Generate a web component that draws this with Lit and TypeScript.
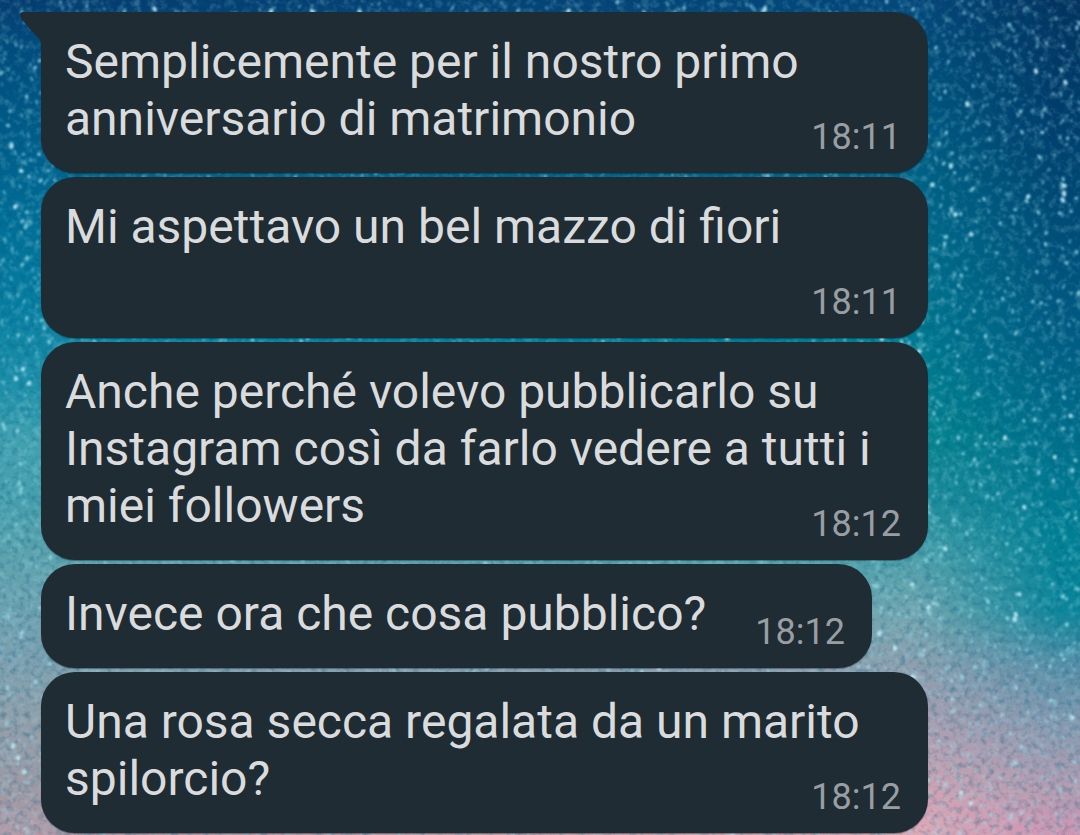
import { LitElement, html, svg, css } from "lit";
import { customElement, property } from "lit/decorators.js";

interface Message {
  text: string;
  time: string;
}

const MESSAGES: Message[] = [
  { text: "Semplicemente per il nostro primo anniversario di matrimonio", time: "18:11" },
  { text: "Mi aspettavo un bel mazzo di fiori", time: "18:11" },
  { text: "Anche perché volevo pubblicarlo su Instagram così da farlo vedere a tutti i miei followers", time: "18:12" },
  { text: "Invece ora che cosa pubblico?", time: "18:12" },
  { text: "Una rosa secca regalata da un marito spilorcio?", time: "18:12" },
];

type Stop = [number, string];

const LEFT_SKY: Stop[] = [
  [0, "#063c70"], [5, "#024a7c"], [12, "#005583"], [24, "#006a94"], [36, "#067da0"],
  [46, "#1c8fa9"], [53, "#43a2b0"], [60, "#479fac"], [68, "#62a3ae"], [78, "#7ba0b0"],
  [85, "#8f9faa"], [94, "#9d9aa5"], [100, "#b39ba8"],
];
const MIDDLE_SKY: Stop[] = [
  [0, "#05477a"], [12, "#00557f"], [26, "#006a8a"], [40, "#007890"], [52, "#04858f"],
  [60, "#228f9d"], [66, "#4a9fa9"], [74, "#75a5ae"], [80, "#909fae"], [86, "#ac9fb1"],
  [92, "#c5a2b2"], [97, "#dba5b6"], [100, "#dda9b6"],
];
const RIGHT_SKY: Stop[] = [
  [0, "#04335f"], [14, "#013c6c"], [26, "#004a76"], [40, "#005c84"], [52, "#006e8a"],
  [64, "#008094"], [73, "#0b869a"], [80, "#5b90a8"], [88, "#8f9bb0"], [95, "#b59bb0"],
  [100, "#cf95b3"],
];

/** Small seeded generator, so that the sky is the same on every load. */
function seeded(seed: number) {
  let s = seed;
  return () => {
    s = (s * 1664525 + 1013904223) >>> 0;
    return s / 4294967296;
  };
}

function starPath(seed: number, count: number, length: number): string {
  const random = seeded(seed);
  let d = "";
  for (let i = 0; i < count; i++) {
    const x = random() * 1080;
    const y = random() * 835;
    const dx = (random() - 0.5) * length;
    const dy = random() * length;
    d += `M${x.toFixed(1)} ${y.toFixed(1)}l${dx.toFixed(1)} ${dy.toFixed(1)}`;
  }
  return d;
}

const stops = (list: Stop[]) =>
  list.map(([at, color]) => svg`<stop offset=${at + "%"} stop-color=${color}></stop>`);

@customElement("starry-wallpaper")
export class StarryWallpaper extends LitElement {
  static styles = css`
    :host {
      display: block;
      position: absolute;
      inset: 0;
      overflow: hidden;
    }
    .sky {
      display: block;
      width: 100%;
      height: 100%;
    }
    .star {
      fill: none;
      stroke-linecap: round;
    }
  `;

  render() {
    return html`
      <svg class="sky" viewBox="0 0 1080 835" preserveAspectRatio="none" aria-hidden="true">
        <defs>
          <linearGradient id="left" x2="0" y2="1">${stops(LEFT_SKY)}</linearGradient>
          <linearGradient id="middle" x2="0" y2="1">${stops(MIDDLE_SKY)}</linearGradient>
          <linearGradient id="right" x2="0" y2="1">${stops(RIGHT_SKY)}</linearGradient>
          <linearGradient id="fadeMiddle">
            <stop offset="5%" stop-color="#000"></stop>
            <stop offset="86%" stop-color="#fff"></stop>
          </linearGradient>
          <linearGradient id="fadeRight">
            <stop offset="85%" stop-color="#000"></stop>
            <stop offset="98%" stop-color="#fff"></stop>
          </linearGradient>
          <mask id="maskMiddle"><rect width="1080" height="835" fill="url(#fadeMiddle)"></rect></mask>
          <mask id="maskRight"><rect width="1080" height="835" fill="url(#fadeRight)"></rect></mask>
          <filter id="dust" x="0" y="0" width="100%" height="100%">
            <feTurbulence type="fractalNoise" baseFrequency="0.12" numOctaves="3" seed="7"></feTurbulence>
            <feColorMatrix values="0 0 0 0 0.4  0 0 0 0 0.8  0 0 0 0 0.85  2.4 0 0 0 -1.15"></feColorMatrix>
          </filter>
          <filter id="shade" x="0" y="0" width="100%" height="100%">
            <feTurbulence type="fractalNoise" baseFrequency="0.16" numOctaves="3" seed="21"></feTurbulence>
            <feColorMatrix values="0 0 0 0 0  0 0 0 0 0.1  0 0 0 0 0.2  2 0 0 0 -0.9"></feColorMatrix>
          </filter>
          <filter id="soft"><feGaussianBlur stdDeviation="0.8"></feGaussianBlur></filter>
        </defs>
        <rect width="1080" height="835" fill="url(#left)"></rect>
        <rect width="1080" height="835" fill="url(#middle)" mask="url(#maskMiddle)"></rect>
        <rect width="1080" height="835" fill="url(#right)" mask="url(#maskRight)"></rect>
        <rect width="1080" height="835" filter="url(#shade)" opacity="0.4"></rect>
        <rect width="1080" height="835" filter="url(#dust)" opacity="0.25"></rect>
        <g filter="url(#soft)">
          <path class="star" d=${starPath(11, 5200, 3)} stroke="#7fd0e6" stroke-width="2" opacity="0.35"></path>
          <path class="star" d=${starPath(29, 2600, 3)} stroke="#9be2f2" stroke-width="2" opacity="0.6"></path>
          <path class="star" d=${starPath(53, 1100, 2)} stroke="#a4e4f2" stroke-width="3" opacity="0.75"></path>
          <path class="star" d=${starPath(83, 160, 2)} stroke="#c8f2fc" stroke-width="4" opacity="0.85"></path>
        </g>
      </svg>
    `;
  }
}

@customElement("chat-bubble")
export class ChatBubble extends LitElement {
  @property() text = "";
  @property() time = "";
  @property({ type: Boolean, reflect: true }) first = false;

  static styles = css`
    :host {
      display: block;
      position: relative;
      box-sizing: border-box;
      max-width: 100%;
      padding: 21px 27px 15px 24px;
      border-radius: 34px;
      background: #1f2c34;
      box-shadow: 0 1px 1px rgba(10, 25, 35, 0.4);
    }
    :host([first]) {
      border-top-left-radius: 0;
    }
    .tail {
      position: absolute;
      top: 0;
      right: 100%;
      width: 22px;
      height: 32px;
      margin-right: -1px;
      fill: #1f2c34;
    }
    .text {
      display: flow-root;
      margin: 0;
      color: #dadbdd;
      font-size: 48px;
      line-height: 57px;
    }
    .time {
      float: right;
      margin: 26px 0 0 49px;
      color: #999ea2;
      font-size: 36px;
      line-height: 42px;
    }
  `;

  render() {
    return html`
      ${this.first
        ? html`<svg class="tail" viewBox="0 0 22 32" aria-hidden="true">
            <path d="M22 0H3C0 0-1 3 1 6L9 16C14 22 21 27 21 32H22Z"></path>
          </svg>`
        : null}
      <p class="text">${this.text}<time class="time" datetime=${this.time}>${this.time}</time></p>
    `;
  }
}

@customElement("app-root")
export class AppRoot extends LitElement {
  static styles = css`
    :host {
      display: block;
      position: relative;
      min-height: 100vh;
      box-sizing: border-box;
      overflow: hidden;
      font-family: Roboto, "Liberation Sans", sans-serif;
    }
    .thread {
      position: relative;
      display: flex;
      flex-direction: column;
      align-items: flex-start;
      gap: 4px;
      padding: 12px 152px 2px 41px;
    }
  `;

  render() {
    return html`
      <starry-wallpaper></starry-wallpaper>
      <main class="thread">
        ${MESSAGES.map(
          (m, i) => html`<chat-bubble .text=${m.text} .time=${m.time} ?first=${i === 0}></chat-bubble>`
        )}
      </main>
    `;
  }
}
